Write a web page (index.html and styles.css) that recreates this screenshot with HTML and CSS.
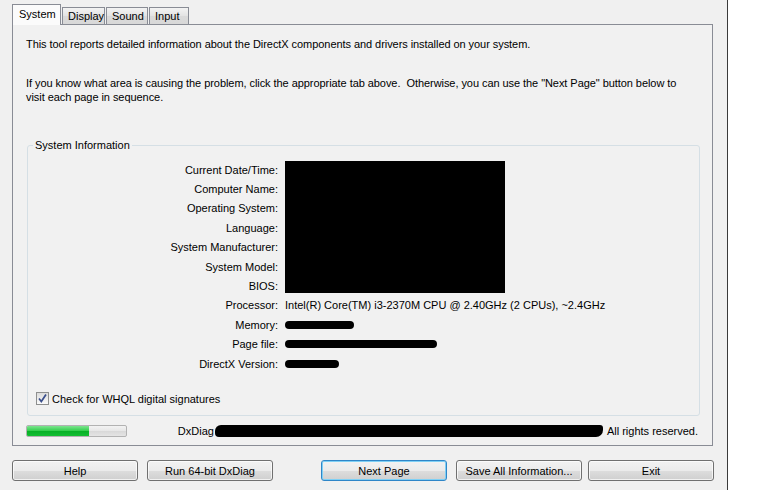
FILE: index.html
```html
<!DOCTYPE html>
<html>
<head>
<meta charset="utf-8">
<link rel="stylesheet" href="styles.css">
</head>
<body>
<div class="screen">
  <div class="dialog">
    <div class="tabs">
      <div class="tab active">System</div>
      <div class="tab">Display</div>
      <div class="tab">Sound</div>
      <div class="tab">Input</div>
    </div>
    <div class="panel">
      <p class="intro">This tool reports detailed information about the DirectX components and drivers installed on your system.</p>
      <p class="intro2">If you know what area is causing the problem, click the appropriate tab above.&nbsp; Otherwise, you can use the "Next Page" button below to<br>visit each page in sequence.</p>
      <fieldset class="group">
        <legend>System Information</legend>
        <div class="info">
          <div class="redact-box"></div>
          <div class="lbl">Current Date/Time:</div>
          <div class="lbl">Computer Name:</div>
          <div class="lbl">Operating System:</div>
          <div class="lbl">Language:</div>
          <div class="lbl">System Manufacturer:</div>
          <div class="lbl">System Model:</div>
          <div class="lbl">BIOS:</div>
          <div class="lbl">Processor:</div>
          <div class="val">Intel(R) Core(TM) i3-2370M CPU @ 2.40GHz (2 CPUs), ~2.4GHz</div>
          <div class="lbl">Memory:</div>
          <div class="val"><span class="scribble s-mem"></span></div>
          <div class="lbl">Page file:</div>
          <div class="val"><span class="scribble s-page"></span></div>
          <div class="lbl">DirectX Version:</div>
          <div class="val"><span class="scribble s-dx"></span></div>
        </div>
        <div class="check">
          <span class="box"><svg width="11" height="11" viewBox="0 0 11 11"><path d="M2 5.5 L4.3 8.5 L9 1.5" fill="none" stroke="#3b4f8c" stroke-width="1.7"/></svg></span>
          <span>Check for WHQL digital signatures</span>
        </div>
      </fieldset>
      <div class="status">
        <div class="progress"><div class="fill"></div></div>
        <div class="copyright">DxDiag<span class="blob"></span>All rights reserved.</div>
      </div>
    </div>
    <div class="buttons">
      <button class="btn">Help</button>
      <button class="btn b-run">Run 64-bit DxDiag</button>
      <button class="btn default b-next">Next Page</button>
      <button class="btn b-save">Save All Information...</button>
      <button class="btn b-exit">Exit</button>
    </div>
  </div>
  <div class="edge"></div>
</div>
</body>
</html>
```
FILE: styles.css
```css
html, body {
  margin: 0;
  padding: 0;
}
body {
  width: 768px;
  height: 490px;
  overflow: hidden;
  font-family: "Liberation Sans", Arial, sans-serif;
  font-size: 11px;
  color: #000;
  background: #fff;
}
.screen {
  display: flex;
  height: 490px;
}
.dialog {
  width: 727px;
  background: #f0f0f0;
  padding: 4px 0 0 12px;
  box-sizing: border-box;
}
.edge {
  width: 1px;
  background: #3a3a3a;
}
.tabs {
  display: flex;
  align-items: flex-end;
  height: 20px;
  position: relative;
  z-index: 1;
}
.tab {
  height: 17px;
  line-height: 16px;
  padding: 0 5px;
  border: 1px solid #898c95;
  border-bottom: none;
  background: linear-gradient(#f3f3f3, #e3e3e3 50%, #dadada 51%, #d8d8d8);
  margin-right: 1px;
  box-sizing: border-box;
}
.tab:nth-child(2) { width: 43px; }
.tab:nth-child(3) { width: 42px; }
.tab:nth-child(4) { width: 40px; }
.tab.active {
  height: 21px;
  width: 49px;
  line-height: 18px;
  background: #fbfbfb;
  margin-bottom: -1px;
  padding: 0 6px;
}
.panel {
  width: 701px;
  height: 422px;
  box-sizing: border-box;
  border: 1px solid #898c95;
  background: #f1f1f1;
  padding: 12px 12px 0 13px;
}
p {
  margin: 0;
  line-height: 14px;
  letter-spacing: -0.06px;
}
.intro2 {
  margin-top: 25px;
}
.group {
  margin: 34px 0 0 1px;
  padding: 0 0 10px 0;
  border: 1px solid #d5dfe5;
  border-radius: 3px;
  min-width: 0;
}
.group legend {
  margin-left: 5px;
  padding: 0 2px;
  line-height: 14px;
}
.info {
  display: grid;
  grid-template-columns: 250px 1fr;
  grid-auto-rows: 19.4px;
  column-gap: 7px;
  margin-top: 8px;
  align-items: center;
}
.lbl {
  grid-column: 1;
  text-align: right;
  white-space: nowrap;
}
.val {
  grid-column: 2;
  white-space: nowrap;
}
.redact-box {
  grid-column: 2;
  grid-row: 1 / span 7;
  align-self: stretch;
  width: 220px;
  margin: 1px 0 3px;
  background: #000;
}
.scribble {
  display: block;
  height: 8px;
  background: #000;
  border-radius: 4px;
}
.s-mem { width: 69px; }
.s-page { width: 152px; }
.s-dx { width: 54px; }
.check {
  display: flex;
  align-items: center;
  margin: 19px 0 0 8px;
  height: 13px;
}
.box {
  width: 11px;
  height: 11px;
  border: 1px solid #8e8f8f;
  background: linear-gradient(#dcdcdc, #fafafa);
  margin-right: 3px;
  display: flex;
}
.status {
  display: flex;
  align-items: center;
  margin-top: 9px;
  height: 12px;
}
.progress {
  width: 101px;
  height: 12px;
  box-sizing: border-box;
  border: 1px solid #b2b2b2;
  border-radius: 2px;
  background: linear-gradient(#f3f3f3, #e6e6e6 50%, #d8d8d8 51%, #e4e4e4);
  overflow: hidden;
}
.fill {
  width: 62px;
  height: 100%;
  background: linear-gradient(#7de48f, #38d050 45%, #06b025 50%, #13be32);
}
.copyright {
  margin-left: auto;
  margin-right: 2px;
  display: flex;
  align-items: center;
  white-space: nowrap;
  line-height: 14px;
}
.blob {
  display: inline-block;
  width: 388px;
  height: 12px;
  margin: 0 4px 0 1px;
  background: #000;
  border-radius: 6px 3px 7px 4px;
}
.buttons {
  display: flex;
  margin-top: 14px;
}
.btn {
  width: 126px;
  height: 21px;
  font: inherit;
  color: #000;
  padding: 0;
  border: 1px solid #707070;
  border-radius: 3px;
  background: linear-gradient(#f2f2f2, #ebebeb 50%, #dddddd 51%, #cfcfcf);
  box-shadow: inset 0 0 0 1px rgba(255,255,255,0.7);
}
.btn.default {
  border-color: #2f86c8;
  box-shadow: inset 0 0 0 1px #7fd0f5;
}
.b-run { margin-left: 9px; }
.b-next { margin-left: 48px; }
.b-save { margin-left: 9px; }
.b-exit { margin-left: 6px; }
```
